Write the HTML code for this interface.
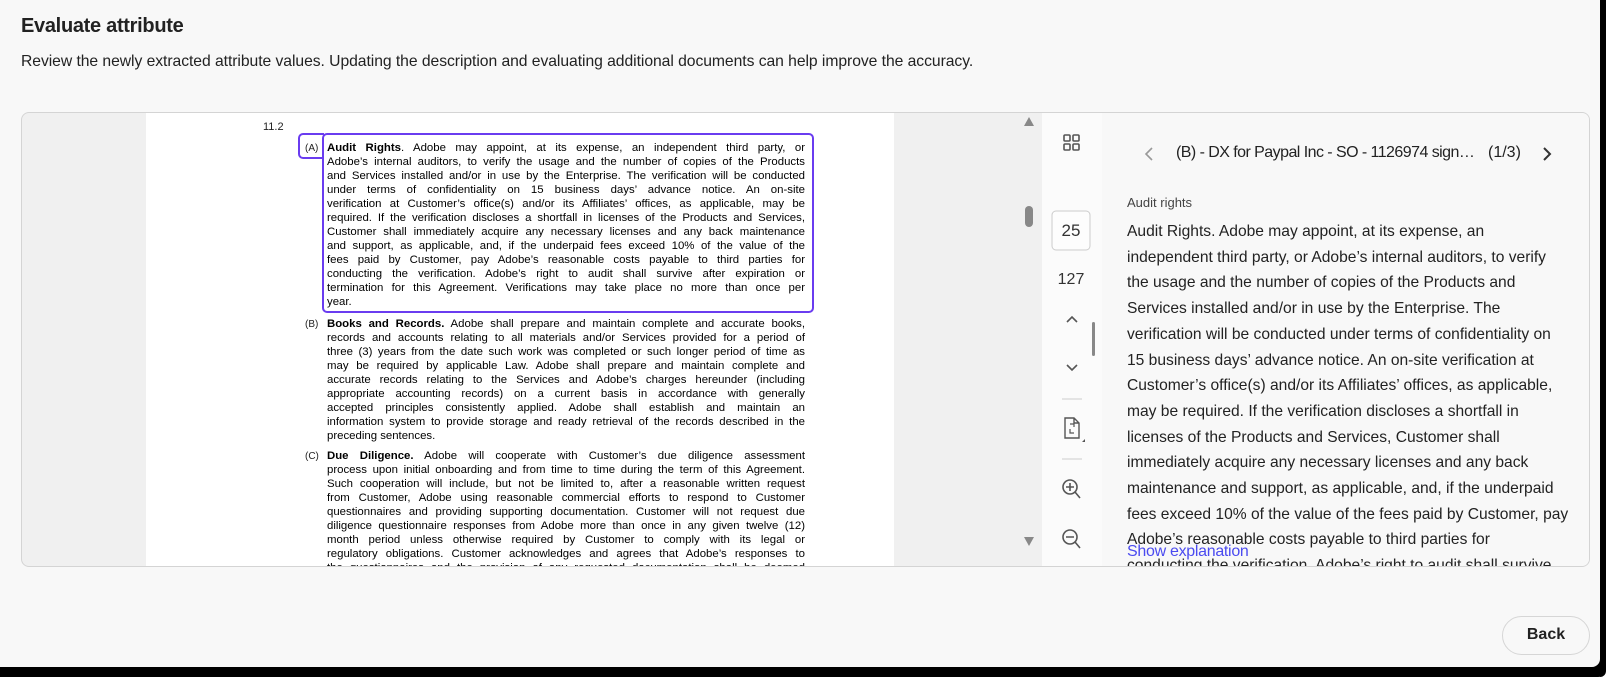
<!DOCTYPE html>
<html><head><meta charset="utf-8"><style>
*{margin:0;padding:0;box-sizing:border-box}
html,body{width:1616px;height:677px;overflow:hidden;background:#fff}
body{font-family:"Liberation Sans",sans-serif;position:relative}
.page{position:absolute;left:0;top:0;width:1600px;height:667px;background:#f8f8f8;box-shadow:6px 6px 0 #000;border-bottom-right-radius:8px}
.shadow{position:absolute;left:0;top:667px;width:1606px;height:10px;background:#000;border-radius:0 0 8px 0}
.shadowr{position:absolute;left:1600px;top:0;width:6px;height:677px;background:#000;border-radius:0 0 6px 0}
h1{position:absolute;left:21px;top:15px;font-size:20px;font-weight:bold;color:#222;letter-spacing:-0.3px}
.sub{position:absolute;left:21px;top:53px;font-size:15.7px;color:#222;letter-spacing:-0.05px}
.panel{position:absolute;left:21px;top:112px;width:1569px;height:455px;border:1px solid #d4d4d4;border-radius:8px;background:#f0f0f0;overflow:hidden}
.doc{position:absolute;left:124px;top:0;width:748px;height:455px;background:#fff;overflow:hidden}
.doc .n{position:absolute;left:117px;top:8px;font-size:11px;color:#222}
.blk{position:absolute;left:181px;width:478px;font-size:11.4px;line-height:14px;color:#000}
.blk div{text-align:justify;text-align-last:justify;white-space:nowrap;overflow:visible;height:14px}
.blk div.l{text-align-last:left}
.lab{position:absolute;left:-22px;font-size:10px;color:#222}
.hl{position:absolute;left:176px;top:20px;width:492px;height:180px;border:2px solid #6a3cf0;border-radius:5px}
.hl2{position:absolute;left:152px;top:20px;width:26px;height:26px;border:2px solid #6a3cf0;border-right:none;border-radius:5px 0 0 5px}
.tb{position:absolute;left:1020px;top:0;width:60px;height:455px;background:#fbfbfb}
.rp{position:absolute;left:1080px;top:0;width:489px;height:455px;background:#f8f8f8;overflow:hidden}
.body{position:absolute;left:25px;top:106px;font-size:15.6px;line-height:25.7px;color:#222;letter-spacing:0;white-space:nowrap}
.back{position:absolute;left:1502px;top:616px;width:88px;height:39px;border:1.5px solid #d6d6d6;border-radius:20px;font-size:16px;font-weight:bold;color:#222;text-align:center;line-height:36px;background:#f8f8f8}
</style></head><body>
<div class="shadowr"></div><div class="shadow"></div>
<div class="page">
<h1>Evaluate attribute</h1>
<div class="sub">Review the newly extracted attribute values. Updating the description and evaluating additional documents can help improve the accuracy.</div>
<div class="panel">
 <div class="doc">
  <div class="n">11.2</div>
  <div class="hl2"></div><div class="hl"></div>
  <div class="blk" style="top:28px"><span class="lab" style="top:1px">(A)</span>
   <div><b>Audit Rights</b>. Adobe may appoint, at its expense, an independent third party, or</div>
   <div>Adobe’s internal auditors, to verify the usage and the number of copies of the Products</div>
   <div>and Services installed and/or in use by the Enterprise. The verification will be conducted</div>
   <div>under terms of confidentiality on 15 business days’ advance notice. An on-site</div>
   <div>verification at Customer’s office(s) and/or its Affiliates’ offices, as applicable, may be</div>
   <div>required. If the verification discloses a shortfall in licenses of the Products and Services,</div>
   <div>Customer shall immediately acquire any necessary licenses and any back maintenance</div>
   <div>and support, as applicable, and, if the underpaid fees exceed 10% of the value of the</div>
   <div>fees paid by Customer, pay Adobe’s reasonable costs payable to third parties for</div>
   <div>conducting the verification. Adobe’s right to audit shall survive after expiration or</div>
   <div>termination for this Agreement. Verifications may take place no more than once per</div>
   <div class="l">year.</div>
  </div>
  <div class="blk" style="top:204px"><span class="lab" style="top:1px">(B)</span>
   <div><b>Books and Records.</b> Adobe shall prepare and maintain complete and accurate books,</div>
   <div>records and accounts relating to all materials and/or Services provided for a period of</div>
   <div>three (3) years from the date such work was completed or such longer period of time as</div>
   <div>may be required by applicable Law. Adobe shall prepare and maintain complete and</div>
   <div>accurate records relating to the Services and Adobe’s charges hereunder (including</div>
   <div>appropriate accounting records) on a current basis in accordance with generally</div>
   <div>accepted principles consistently applied. Adobe shall establish and maintain an</div>
   <div>information system to provide storage and ready retrieval of the records described in the</div>
   <div class="l">preceding sentences.</div>
  </div>
  <div class="blk" style="top:336px"><span class="lab" style="top:1px">(C)</span>
   <div><b>Due Diligence.</b> Adobe will cooperate with Customer’s due diligence assessment</div>
   <div>process upon initial onboarding and from time to time during the term of this Agreement.</div>
   <div>Such cooperation will include, but not be limited to, after a reasonable written request</div>
   <div>from Customer, Adobe using reasonable commercial efforts to respond to Customer</div>
   <div>questionnaires and providing supporting documentation. Customer will not request due</div>
   <div>diligence questionnaire responses from Adobe more than once in any given twelve (12)</div>
   <div>month period unless otherwise required by Customer to comply with its legal or</div>
   <div>regulatory obligations. Customer acknowledges and agrees that Adobe’s responses to</div>
   <div>the questionnaires and the provision of any requested documentation shall be deemed</div>
  </div>
 </div>
 <svg style="position:absolute;left:996px;top:0" width="22" height="455">
  <polygon points="11,4 16,13 6,13" fill="#888"/>
  <rect x="7" y="93" width="8" height="21" rx="4" fill="#888"/>
  <polygon points="11,433 16,424 6,424" fill="#888"/>
 </svg>
 <div class="tb">
  <svg width="60" height="455" fill="none" stroke="#555" stroke-width="1.6">
   <rect x="22" y="22" width="6" height="6" rx="1"/><rect x="31" y="22" width="6" height="6" rx="1"/>
   <rect x="22" y="31" width="6" height="6" rx="1"/><rect x="31" y="31" width="6" height="6" rx="1"/>
   <rect x="10" y="98" width="38" height="39" rx="4" stroke="#ccc" stroke-width="1" fill="#fdfdfd"/>
   <path d="M25 209 L30 204 L35 209"/>
   <path d="M25 252 L30 257 L35 252"/>
   <rect x="50" y="209" width="3" height="34" rx="1.5" fill="#888" stroke="none"/>
   <line x1="20" y1="286" x2="40" y2="286" stroke="#ddd"/>
   <path d="M23 305 h9 l5 5 v15 h-14 z M32 305 v5 h5" stroke-width="1.4"/>
   <path d="M28 316 l0 4 l4 0 M32 314 l0 -3 l-4 0" stroke-width="1.2"/>
   <polygon points="40,329 43,326 43,329" fill="#555" stroke="none"/>
   <line x1="20" y1="346" x2="40" y2="346" stroke="#ddd"/>
   <circle cx="28" cy="374" r="7"/><path d="M33 379 L38 385 M28 370 v8 M24 374 h8"/>
   <circle cx="28" cy="424" r="7"/><path d="M33 429 L38 435 M24 424 h8"/>
  </svg>
  <div style="position:absolute;left:10px;top:108px;width:38px;text-align:center;font-size:17px;color:#333">25</div>
  <div style="position:absolute;left:8px;top:158px;width:42px;text-align:center;font-size:16px;color:#333">127</div>
 </div>
 <div class="rp">
  <svg style="position:absolute;left:40px;top:32px" width="14" height="18" fill="none" stroke="#999" stroke-width="1.6"><path d="M10 3 L4 9 L10 15"/></svg>
  <div style="position:absolute;left:74px;top:31px;font-size:16px;color:#222;letter-spacing:-0.55px;white-space:nowrap">(B) - DX for Paypal Inc - SO - 1126974 sign…</div>
  <div style="position:absolute;left:386px;top:31px;font-size:16px;color:#222">(1/3)</div>
  <svg style="position:absolute;left:438px;top:32px" width="14" height="18" fill="none" stroke="#333" stroke-width="2"><path d="M4 3 L10 9 L4 15"/></svg>
  <div style="position:absolute;left:25px;top:82px;font-size:13px;color:#444">Audit rights</div>
  <div class="body">Audit Rights. Adobe may appoint, at its expense, an<br>independent third party, or Adobe’s internal auditors, to verify<br>the usage and the number of copies of the Products and<br>Services installed and/or in use by the Enterprise. The<br>verification will be conducted under terms of confidentiality on<br>15 business days’ advance notice. An on-site verification at<br>Customer’s office(s) and/or its Affiliates’ offices, as applicable,<br>may be required. If the verification discloses a shortfall in<br>licenses of the Products and Services, Customer shall<br>immediately acquire any necessary licenses and any back<br>maintenance and support, as applicable, and, if the underpaid<br>fees exceed 10% of the value of the fees paid by Customer, pay<br>Adobe’s reasonable costs payable to third parties for<br>conducting the verification. Adobe’s right to audit shall survive</div>
  <div style="position:absolute;left:25px;top:430px;font-size:16px;color:#4b4bf0;letter-spacing:-0.3px">Show explanation</div>
 </div>
</div>
<div class="back">Back</div>
</div>
</body></html>
